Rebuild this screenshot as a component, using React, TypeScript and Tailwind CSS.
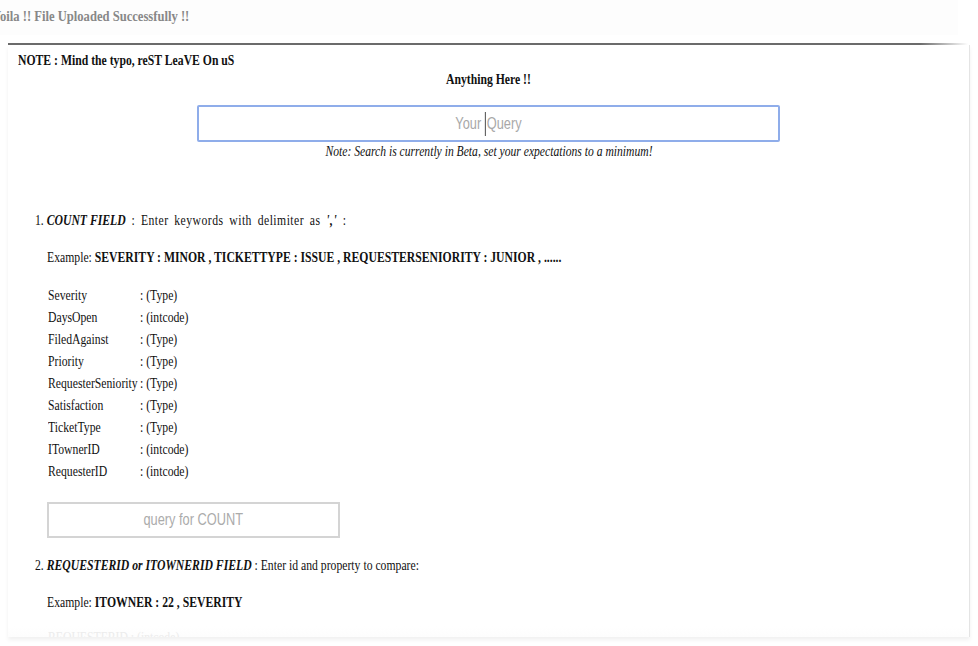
import React from "react";

const serif = { fontFamily: '"Liberation Serif", "Times New Roman", serif' };
const sans = { fontFamily: '"Liberation Sans", Arial, sans-serif' };

const rows: [string, string][] = [
  ["Severity", ": (Type)"],
  ["DaysOpen", ": (intcode)"],
  ["FiledAgainst", ": (Type)"],
  ["Priority", ": (Type)"],
  ["RequesterSeniority", ": (Type)"],
  ["Satisfaction", ": (Type)"],
  ["TicketType", ": (Type)"],
  ["ITownerID", ": (intcode)"],
  ["RequesterID", ": (intcode)"],
];

function S({ children, className = "" }: { children: React.ReactNode; className?: string }) {
  return (
    <span className={"inline-block whitespace-nowrap origin-left scale-x-[0.78] " + className}>
      {children}
    </span>
  );
}

export default function App() {
  return (
    <div
      className="relative w-[978px] h-[646px] overflow-hidden bg-white text-[#111]"
      style={serif}
    >
      {/* top bar */}
      <div className="h-[35px] w-[958px] bg-[#fdfdfd] pt-[7px]">
        <div className="ml-[-8px] text-[14px] font-bold text-[#888] leading-[20px]">
          <span className="inline-block whitespace-nowrap origin-left scale-x-[0.9]">
            Voila !! File Uploaded Successfully !!
          </span>
        </div>
      </div>
      <div className="h-[8px]" />
      {/* divider */}
      <div className="ml-[8px] w-[960px] h-[2px] bg-gradient-to-r from-[#6b6b6b] via-[#6b6b6b] via-[95%] to-transparent" />
      {/* main panel */}
      <div className="ml-[8px] w-[962px] h-[592px] border-r border-[#e4e4e4] shadow-[0_3px_4px_rgba(0,0,0,0.06)] relative overflow-hidden">
        <div className="pl-[10px] pt-[6px] text-[15px] font-bold leading-[18px]">
          <S>NOTE : Mind the typo, reST LeaVE On uS</S>
        </div>
        <div className="flex justify-center text-[15px] font-bold leading-[18px] mt-[1px]">
          <span className="inline-block whitespace-nowrap origin-center scale-x-[0.78]">
            Anything Here !!
          </span>
        </div>
        <div className="flex flex-col items-center mt-[17px]">
          <div className="w-[583px] h-[37px] border-2 border-[#8fadea] rounded-[2px] flex items-center justify-center bg-white">
            <span
              className="inline-block whitespace-nowrap origin-center scale-x-[0.8] text-[16px] text-[#a8a8a8]"
              style={sans}
            >
              Your<span className="inline-block ml-[5px] border-l border-[#222] pl-[1px]">Q</span>uery
            </span>
          </div>
          <div className="italic text-[14px] leading-[18px] mt-[1px]">
            <span className="inline-block whitespace-nowrap origin-center scale-x-[0.83]">
              Note: Search is currently in Beta, set your expectations to a minimum!
            </span>
          </div>
        </div>

        <div className="pl-[27px] mt-[50px] text-[15px] leading-[18px]">
          <S>
            1. <b className="italic">COUNT FIELD</b>
            <span className="tracking-[0.6px] [word-spacing:3px]">
              {" "}: Enter keywords with delimiter as <b className="italic">','</b> :
            </span>
          </S>
        </div>
        <div className="pl-[39px] mt-[19px] text-[15px] leading-[18px]">
          <S>
            Example:{" "}
            <b>SEVERITY : MINOR , TICKETTYPE : ISSUE , REQUESTERSENIORITY : JUNIOR , ......</b>
          </S>
        </div>

        <div className="ml-[40px] mt-[18px] origin-left scale-x-[0.78] grid grid-cols-[118px_auto] text-[15px] leading-[22px] w-[300px]">
          {rows.map(([a, b]) => (
            <React.Fragment key={a}>
              <div className="whitespace-nowrap">{a}</div>
              <div className="whitespace-nowrap">{b}</div>
            </React.Fragment>
          ))}
        </div>

        <div className="ml-[39px] mt-[20px] w-[293px] h-[36px] border-2 border-[#d4d4d4] flex items-center justify-center">
          <span
            className="inline-block whitespace-nowrap origin-center scale-x-[0.8] text-[16px] text-[#ababab]"
            style={sans}
          >
            query for COUNT
          </span>
        </div>

        <div className="pl-[27px] mt-[18px] text-[15px] leading-[18px]">
          <S>
            2. <b className="italic">REQUESTERID or ITOWNERID FIELD</b> : Enter id and property to compare:
          </S>
        </div>
        <div className="pl-[39px] mt-[19px] text-[15px] leading-[18px]">
          <S>
            Example: <b>ITOWNER : 22 , SEVERITY</b>
          </S>
        </div>
        <div className="pl-[40px] mt-[15px] text-[15px] leading-[22px] text-[#ececec] bg-gradient-to-b from-white to-[#fbfbfb]">
          <S>REQUESTERID : (intcode)</S>
        </div>
      </div>
    </div>
  );
}
